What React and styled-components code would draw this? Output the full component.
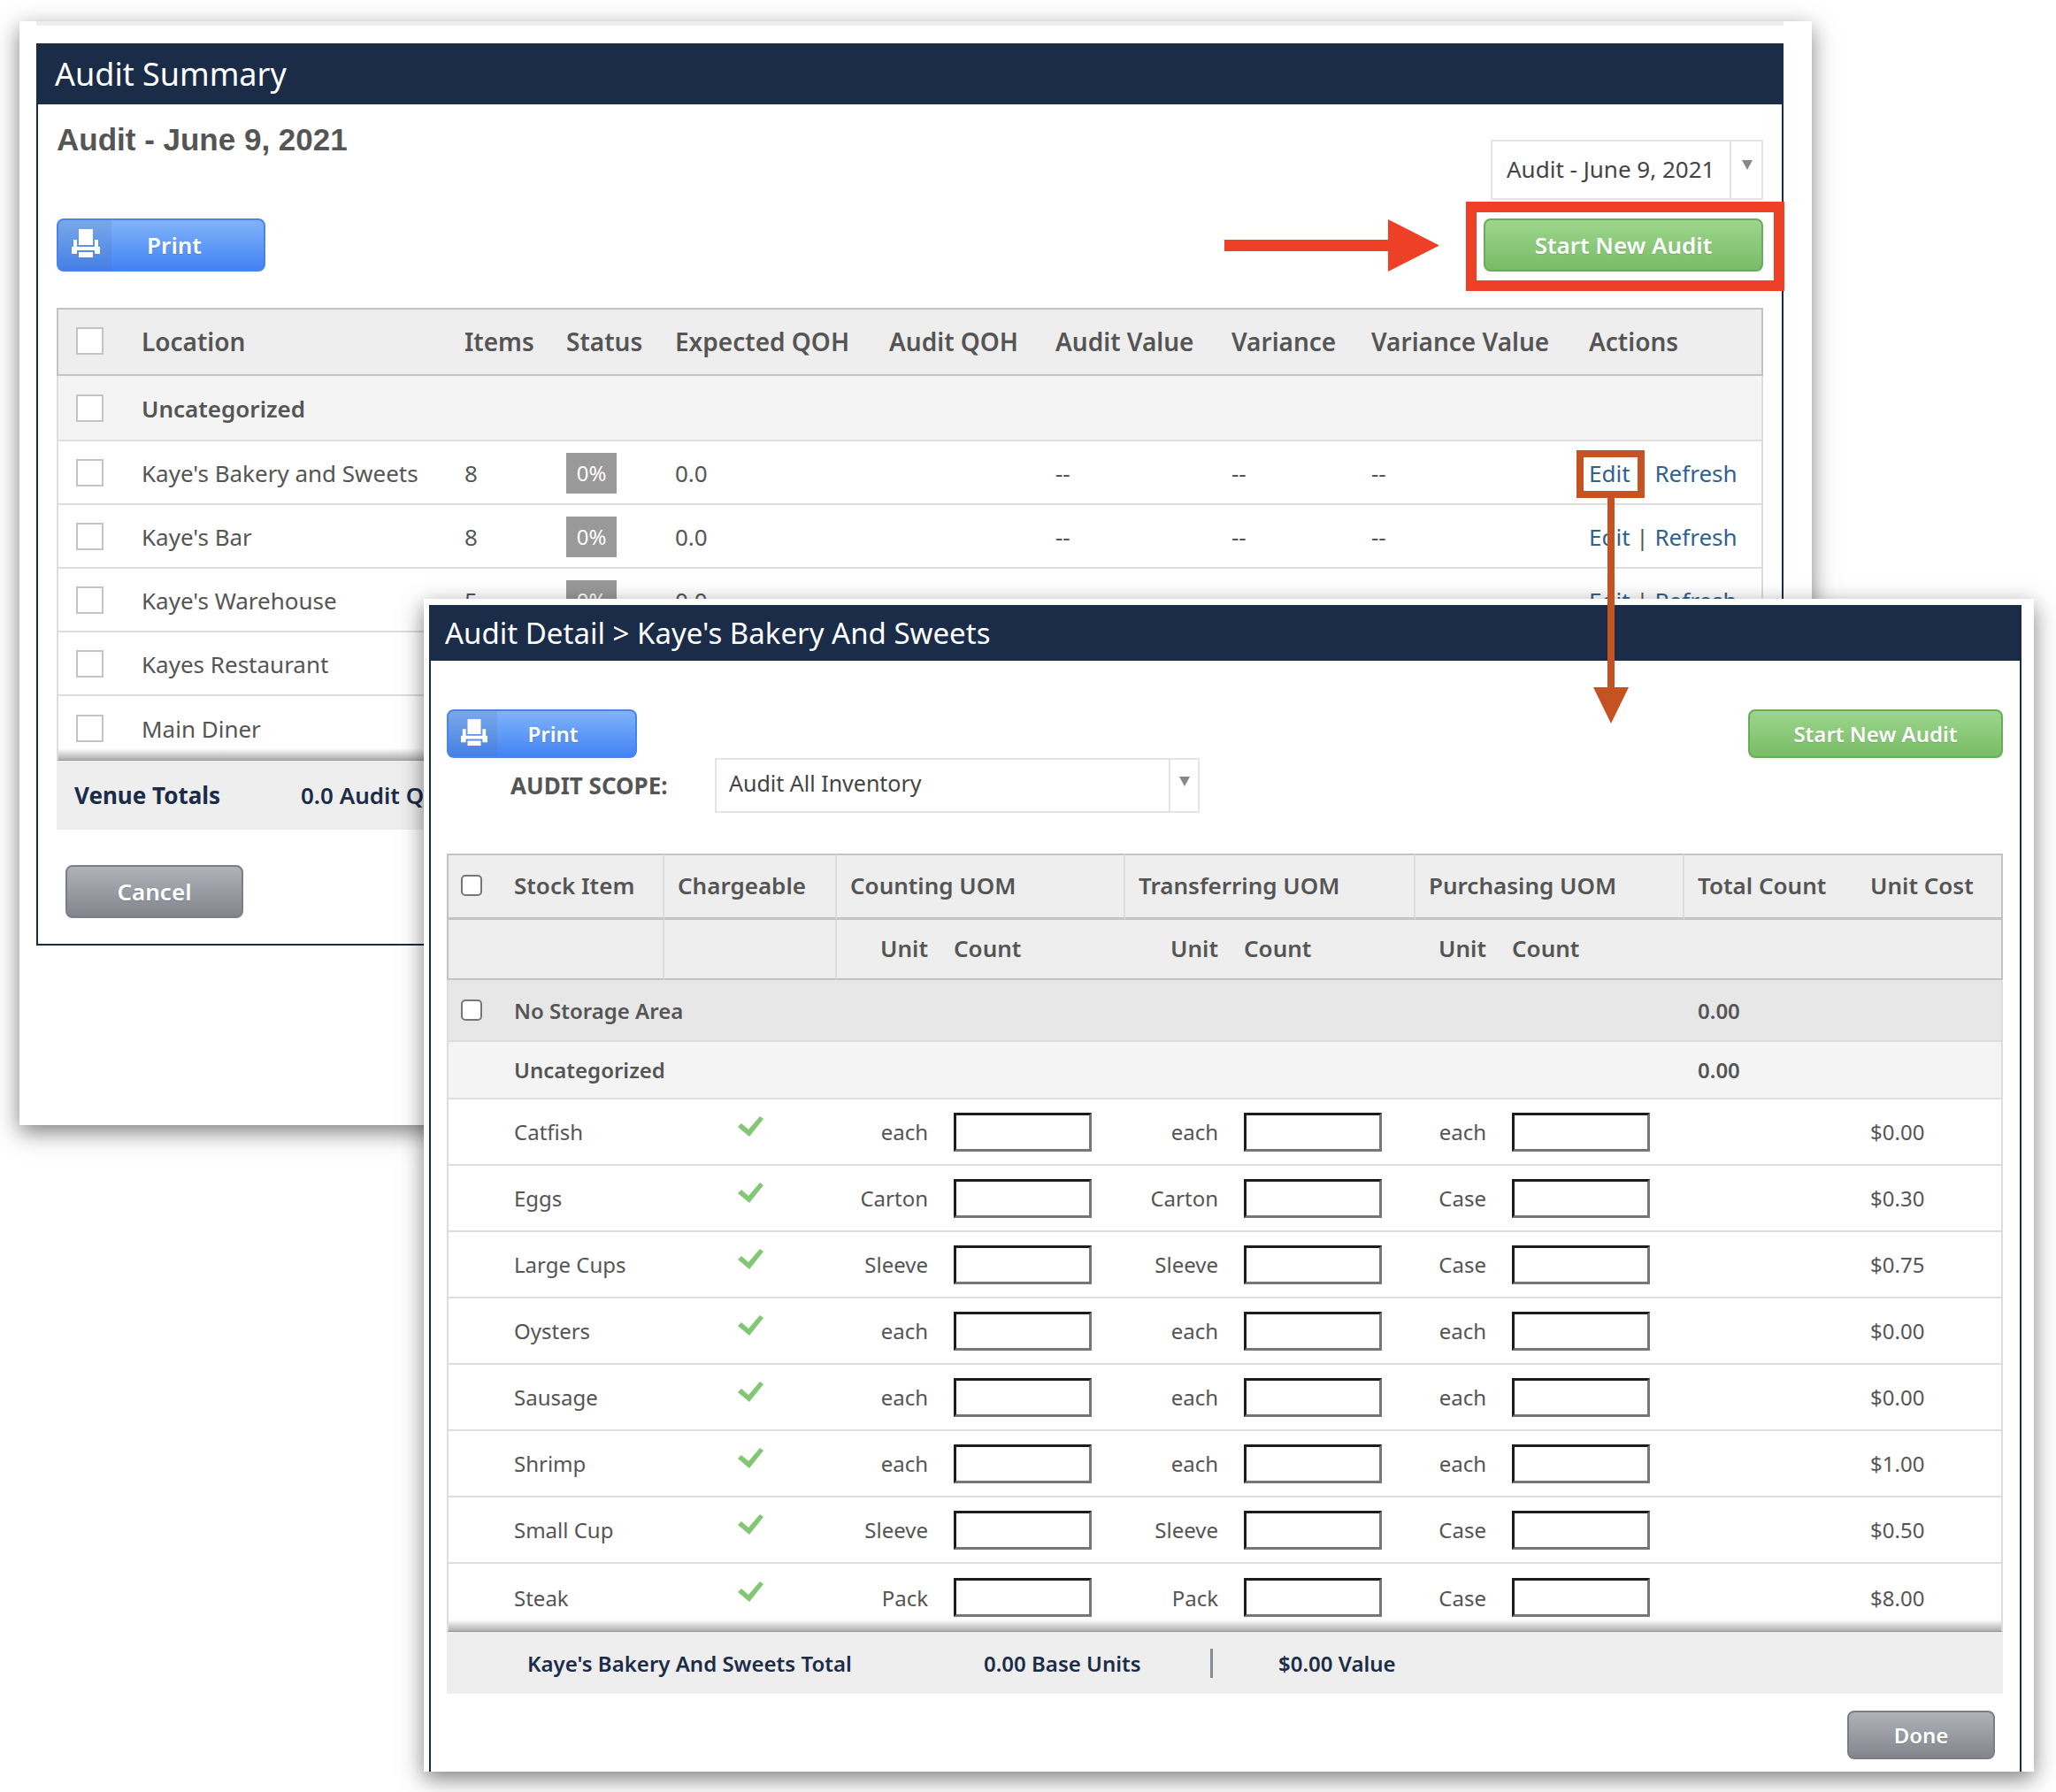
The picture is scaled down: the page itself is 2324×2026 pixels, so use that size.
import React from "react";
import styled, { createGlobalStyle, css } from "styled-components";

const navy = "#1b2c49";
const ink = "#555555";
const sans = '"Noto Sans", "Open Sans", sans-serif';

const GlobalStyle = createGlobalStyle`
  *, *::before, *::after { box-sizing: border-box; }
  body { margin: 0; background: #fff; color: ${ink}; font-family: ${sans}; }
  button, input, select { font-family: inherit; margin: 0; }
`;

const Canvas = styled.div`
  position: relative;
  min-height: 100vh;
  padding: 677px 25px 23px 479px;
  overflow: hidden;
`;

const windowSurface = css`
  background: #fff;
  box-shadow: 0 8px 24px rgba(0, 0, 0, 0.5);
`;

const SummaryWindow = styled.section`
  ${windowSurface}
  position: absolute;
  top: 24px;
  left: 22px;
  right: 276px;
  padding: 0 32px 203px 19px;
`;

const DetailWindow = styled.section`
  ${windowSurface}
  position: relative;
  z-index: 1;
  padding: 7px 14px 0 6px;
`;

const TopStrip = styled.div`
  height: 5px;
  margin-bottom: 20px;
  background: #eee;
`;

const Panel = styled.div`
  border: 2px solid ${navy};
  border-top: 0;
  border-bottom-width: ${(p) => (p.$open ? 0 : 2)}px;
`;

const TitleBar = styled.h1`
  margin: 0 -2px;
  padding: 0 ${(p) => (p.$compact ? 18 : 21)}px;
  background: ${navy};
  color: #fff;
  font-weight: 400;
  font-size: ${(p) => (p.$compact ? 33 : 36)}px;
  line-height: ${(p) => (p.$compact ? 63 : 69)}px;
`;

const SummaryBody = styled.div`
  padding: 16px 21px 29px;
`;

const DetailBody = styled.div`
  padding: 55px 19px 14px 18px;
`;

const AuditHeading = styled.h2`
  margin: 0;
  color: ${ink};
  font: 700 35px/48px "Liberation Sans", Arial, sans-serif;
`;

const Split = styled.div`
  display: flex;
  justify-content: space-between;
  align-items: flex-start;
`;

const HeadRow = styled(Split)`
  height: 113px;
`;

const PickerSlot = styled.div`
  padding-top: 24px;
`;

const SelectBox = styled.div`
  position: relative;
  width: ${(p) => p.$width}px;
  height: ${(p) => (p.$compact ? 62 : 68)}px;
  border: 2px solid #e4e4e4;

  &::before {
    content: "";
    position: absolute;
    top: 0;
    bottom: 0;
    right: ${(p) => (p.$compact ? 31 : 34)}px;
    width: 2px;
    background: #e4e4e4;
    pointer-events: none;
  }

  &::after {
    content: "";
    position: absolute;
    top: ${(p) => (p.$compact ? 19 : 21)}px;
    right: ${(p) => (p.$compact ? 9 : 10)}px;
    border: 6px solid transparent;
    border-top: 11px solid #888;
    border-bottom: 0;
    pointer-events: none;
  }

  select {
    appearance: none;
    width: 100%;
    height: 100%;
    padding: ${(p) => (p.$compact ? "0 40px 6px 14px" : "0 40px 2px 16px")};
    border: 0;
    border-radius: 0;
    background: transparent;
    color: #444;
    font-size: ${(p) => (p.$compact ? 25 : 26)}px;
  }
`;

const palettes = {
  blue: ["#83b5fa", "#4081f4", "#4a84ea"],
  green: ["#9fd78e", "#76bb65", "#69ad5b"],
  gray: ["#b1b4b9", "#80838b", "#7b7e86"],
};

const Button = styled.button`
  position: relative;
  display: flex;
  align-items: center;
  justify-content: center;
  width: ${(p) => p.$width}px;
  height: ${(p) => (p.$compact ? 55 : 60)}px;
  padding: 0;
  border: 2px solid ${(p) => palettes[p.$tone][2]};
  border-radius: 8px;
  background: linear-gradient(${(p) => palettes[p.$tone][0]}, ${(p) => palettes[p.$tone][1]});
  background-origin: border-box;
  color: #fff;
  font-weight: 600;
  font-size: ${(p) => (p.$compact ? 24 : 26)}px;
  text-shadow: 0 1px 1px rgba(0, 0, 0, 0.15);
  overflow: ${(p) => (p.$clip ? "hidden" : "visible")};
`;

const PrintIconCell = styled.span`
  display: flex;
  flex: none;
  align-items: center;
  justify-content: center;
  width: ${(p) => (p.$compact ? 55 : 60)}px;
  height: 100%;
  background: rgba(90, 110, 150, 0.16);

  svg {
    width: ${(p) => (p.$compact ? 30 : 32)}px;
    height: ${(p) => (p.$compact ? 30 : 32)}px;
    margin: 0 0 4px 2px;
  }
`;

const PrintLabel = styled.span`
  flex: 1;
  padding-right: 30px;
  text-align: center;
`;

const Highlight = styled.div`
  position: relative;

  &::after {
    content: "";
    position: absolute;
    inset: -19px -24px -22px -20px;
    border: 12px solid #ee4026;
    pointer-events: none;
  }
`;

const RedArrow = styled.svg`
  position: absolute;
  top: 1px;
  right: 366px;
  width: 243px;
  height: 59px;
`;

const EditMark = styled.span`
  position: relative;

  &::after {
    content: "";
    position: absolute;
    z-index: 2;
    top: -8px;
    left: -14px;
    width: 77px;
    height: 54px;
    border: 8px solid #c55322;
    pointer-events: none;
  }
`;

const BrownArrow = styled.svg`
  position: absolute;
  z-index: 2;
  top: 46px;
  left: 5px;
  width: 40px;
  height: 255px;
  pointer-events: none;
`;

const Table = styled.table`
  width: 100%;
  table-layout: fixed;
  border-collapse: separate;
  border-spacing: 0;
  font-size: ${(p) => (p.$compact ? 24 : 26)}px;

  th, td {
    padding: 0;
    text-align: left;
    white-space: nowrap;
    font-weight: 400;
  }

  tbody td { border-bottom: 2px solid #ddd; }
  tbody tr > :first-child { border-left: 2px solid #ddd; }
  tbody tr > :last-child { border-right: 2px solid #ddd; }

  thead th {
    padding-bottom: 2px;
    background: #eee;
    font-weight: 600;
    font-size: ${(p) => (p.$compact ? 26 : 28)}px;
    border-bottom: 2px solid #c3c3c3;
  }
  thead tr:first-child th { border-top: 2px solid #c3c3c3; }
  thead tr > :first-child { border-left: 2px solid #c3c3c3; }
  thead tr > :last-child { border-right: 2px solid #c3c3c3; }

  tbody tr:last-child { background: linear-gradient(to top, #a8a8a8, #fff 14px); }
  tbody tr:last-child > td { border-bottom: 1px solid #999; }
`;

const SummaryTable = styled(Table)`
  margin-top: 41px;

  thead th { height: 77px; }
  tbody td { height: 72px; }
  tbody td + td { padding-top: 2px; }
  tbody tr:last-child td { height: 73px; }
`;

const DetailTable = styled(Table)`
  margin-top: 46px;

  tbody td { height: 75px; }
  tbody td:nth-child(n + 3) { padding-left: 15px; }
  tbody tr:last-child td { height: 77px; }
`;

const HeadTop = styled.tr`
  && th {
    height: 75px;
    padding-left: 15px;
    border-bottom: 3px solid #c3c3c3;
  }
  && th:nth-child(1) { padding-left: 14px; }
  && th:nth-child(2) { padding-left: 0; }
  && th:nth-child(n + 2):nth-child(-n + 6) { border-right: 2px solid #ddd; }
`;

const HeadSub = styled.tr`
  && th { height: 68px; }
  && th:nth-child(2), && th:nth-child(3) { border-right: 2px solid #ddd; }
`;

const GroupRow = styled.tr`
  && td {
    height: ${(p) => p.$height}px;
    background: ${(p) => p.$shade};
    font-weight: 600;
  }
`;

const CheckCell = styled.td`
  && { padding-left: ${(p) => (p.$compact ? 14 : 20)}px; }
`;

const CheckHead = styled.th`
  && { padding-left: 20px; }
`;

const SquareCheck = styled.input`
  appearance: none;
  display: block;
  width: 31px;
  height: 31px;
  border: 2px solid #c4c4c4;
  background: #fff;
`;

const RoundCheck = styled.input`
  appearance: none;
  display: block;
  width: 24px;
  height: 24px;
  border: 2px solid #767676;
  border-radius: 5px;
  background: #fff;
`;

const Badge = styled.span`
  display: block;
  width: 57px;
  background: #999;
  color: #fff;
  font-size: 24px;
  line-height: 46px;
  text-align: center;
`;

const Link = styled.a`
  color: #2f628f;
  text-decoration: none;
`;

const UnitCell = styled.td`
  && { padding-right: 14px; text-align: right; }
`;

const UnitHead = styled.th`
  && { padding-right: 14px; text-align: right; }
`;

const CountHead = styled.th`
  && { padding-left: 15px; }
`;

const CountInput = styled.input`
  display: block;
  width: 156px;
  height: 44px;
  padding: 0 8px;
  border: 3px solid;
  border-color: #1c1c1c #767676 #767676 #1c1c1c;
  border-radius: 0;
  background: #fff;
  color: ${ink};
  font-size: 24px;
`;

const CheckMark = styled.svg`
  display: block;
  width: 29px;
  height: 24px;
  margin: 0 0 12px 68px;
`;

const TotalsBar = styled.div`
  display: flex;
  align-items: center;
  height: ${(p) => (p.$compact ? 70 : 78)}px;
  padding-left: ${(p) => (p.$compact ? 91 : 20)}px;
  background: #eee;
  color: ${navy};
  font-weight: 600;
  font-size: ${(p) => (p.$compact ? 24 : 26)}px;
  white-space: nowrap;
`;

const TotalName = styled.strong`
  width: ${(p) => p.$width}px;
  font-weight: ${(p) => p.$weight};
`;

const TotalUnits = styled.span`
  width: 256px;
`;

const Divider = styled.i`
  width: 3px;
  height: 33px;
  margin-right: 74px;
  background: #868b94;
`;

const Footer = styled.div`
  display: flex;
  padding: ${(p) => (p.$end ? "19px 9px 0" : "40px 10px 0")};
  justify-content: ${(p) => (p.$end ? "flex-end" : "flex-start")};
`;

const ScopeRow = styled.div`
  display: flex;
  align-items: center;
  padding-left: 72px;
`;

const ScopeLabel = styled.label`
  width: 231px;
  color: ${ink};
  font-weight: 700;
  font-size: 26px;
`;

const PrintIcon = () => (
  <svg viewBox="0 0 32 32" fill="#fff" aria-hidden="true">
    <path d="M8 0h16v18H8z" />
    <path d="M2 12h4v8h20v-8h4v8h2v8h-6v-4H6v4H0v-8h2z" />
    <path d="M8 26h16v6H8z" />
  </svg>
);

const PrintButton = ({ compact, width }) => (
  <Button type="button" $tone="blue" $width={width} $compact={compact} $clip>
    <PrintIconCell $compact={compact}><PrintIcon /></PrintIconCell>
    <PrintLabel>Print</PrintLabel>
  </Button>
);

const Tick = () => (
  <CheckMark viewBox="0 0 29 24" role="img" aria-label="Chargeable">
    <path d="M0 12l4-4 8 7L25 0l4 3-16 20z" fill="#82c774" />
  </CheckMark>
);

const locations = [
  { name: "Kaye's Bakery and Sweets", items: 8, marked: true },
  { name: "Kaye's Bar", items: 8 },
  { name: "Kaye's Warehouse", items: 5 },
  { name: "Kayes Restaurant", items: 8 },
  { name: "Main Diner", items: 8 },
];

const stock = [
  ["Catfish", "each", "each", "each", "$0.00"],
  ["Eggs", "Carton", "Carton", "Case", "$0.30"],
  ["Large Cups", "Sleeve", "Sleeve", "Case", "$0.75"],
  ["Oysters", "each", "each", "each", "$0.00"],
  ["Sausage", "each", "each", "each", "$0.00"],
  ["Shrimp", "each", "each", "each", "$1.00"],
  ["Small Cup", "Sleeve", "Sleeve", "Case", "$0.50"],
  ["Steak", "Pack", "Pack", "Case", "$8.00"],
];

const summaryColumns = [96, 365, 115, 123, 242, 188, 199, 158, 246];
const detailColumns = [76, 170, 195, 117, 209, 119, 209, 94, 210, 195];

const Columns = ({ widths }) => (
  <colgroup>
    {widths.map((w, i) => <col key={i} width={w} />)}
    <col />
  </colgroup>
);

function AuditSummary() {
  return (
    <SummaryWindow>
      <TopStrip />
      <Panel>
        <TitleBar>Audit Summary</TitleBar>
        <SummaryBody>
          <HeadRow>
            <AuditHeading>Audit - June 9, 2021</AuditHeading>
            <PickerSlot>
              <SelectBox $width={308}>
                <select aria-label="Audit">
                  <option>Audit - June 9, 2021</option>
                </select>
              </SelectBox>
            </PickerSlot>
          </HeadRow>
          <Split>
            <PrintButton width={236} />
            <Highlight>
              <RedArrow viewBox="0 0 243 59" fill="#ee4026" aria-hidden="true">
                <path d="M0 23h185V0l58 29.500-58 29.500V36H0z" />
              </RedArrow>
              <Button type="button" $tone="green" $width={316}>Start New Audit</Button>
            </Highlight>
          </Split>
          <SummaryTable>
            <Columns widths={summaryColumns} />
            <thead>
              <tr>
                <CheckHead><SquareCheck type="checkbox" aria-label="Select all locations" /></CheckHead>
                <th>Location</th>
                <th>Items</th>
                <th>Status</th>
                <th>Expected QOH</th>
                <th>Audit QOH</th>
                <th>Audit Value</th>
                <th>Variance</th>
                <th>Variance Value</th>
                <th>Actions</th>
              </tr>
            </thead>
            <tbody>
              <GroupRow $height={74} $shade="#f4f4f4">
                <CheckCell><SquareCheck type="checkbox" aria-label="Select Uncategorized" /></CheckCell>
                <td colSpan={9}>Uncategorized</td>
              </GroupRow>
              {locations.map((l) => (
                <tr key={l.name}>
                  <CheckCell><SquareCheck type="checkbox" aria-label={`Select ${l.name}`} /></CheckCell>
                  <td>{l.name}</td>
                  <td>{l.items}</td>
                  <td><Badge>0%</Badge></td>
                  <td>0.0</td>
                  <td />
                  <td>--</td>
                  <td>--</td>
                  <td>--</td>
                  <td>
                    {l.marked ? (
                      <EditMark>
                        <Link href="#edit">Edit</Link>
                        <BrownArrow viewBox="0 0 40 255" fill="#c55322" aria-hidden="true">
                          <path d="M16 0h8v214h16L20 255 0 214h16z" />
                        </BrownArrow>
                      </EditMark>
                    ) : (
                      <Link href="#edit">Edit</Link>
                    )}
                    {" | "}
                    <Link href="#refresh">Refresh</Link>
                  </td>
                </tr>
              ))}
            </tbody>
          </SummaryTable>
          <TotalsBar>
            <TotalName $width={256} $weight={700}>Venue Totals</TotalName>
            <span>0.0 Audit QOH</span>
          </TotalsBar>
          <Footer>
            <Button type="button" $tone="gray" $width={201}>Cancel</Button>
          </Footer>
        </SummaryBody>
      </Panel>
    </SummaryWindow>
  );
}

function AuditDetail() {
  return (
    <DetailWindow>
      <Panel $open>
        <TitleBar $compact>Audit Detail &gt; Kaye's Bakery And Sweets</TitleBar>
        <DetailBody>
          <Split>
            <PrintButton compact width={215} />
            <Button type="button" $tone="green" $width={288} $compact>Start New Audit</Button>
          </Split>
          <ScopeRow>
            <ScopeLabel htmlFor="scope">AUDIT SCOPE:</ScopeLabel>
            <SelectBox $width={548} $compact>
              <select id="scope">
                <option>Audit All Inventory</option>
              </select>
            </SelectBox>
          </ScopeRow>
          <DetailTable $compact>
            <Columns widths={detailColumns} />
            <thead>
              <HeadTop>
                <th><RoundCheck type="checkbox" aria-label="Select all stock items" /></th>
                <th>Stock Item</th>
                <th>Chargeable</th>
                <th colSpan={2}>Counting UOM</th>
                <th colSpan={2}>Transferring UOM</th>
                <th colSpan={2}>Purchasing UOM</th>
                <th>Total Count</th>
                <th>Unit Cost</th>
              </HeadTop>
              <HeadSub>
                <th />
                <th />
                <th />
                <UnitHead>Unit</UnitHead>
                <CountHead>Count</CountHead>
                <UnitHead>Unit</UnitHead>
                <CountHead>Count</CountHead>
                <UnitHead>Unit</UnitHead>
                <CountHead>Count</CountHead>
                <th />
                <th />
              </HeadSub>
            </thead>
            <tbody>
              <GroupRow $height={70} $shade="#e7e7e7">
                <CheckCell $compact><RoundCheck type="checkbox" aria-label="Select No Storage Area" /></CheckCell>
                <td colSpan={8}>No Storage Area</td>
                <td>0.00</td>
                <td />
              </GroupRow>
              <GroupRow $height={65} $shade="#f4f4f4">
                <td />
                <td colSpan={8}>Uncategorized</td>
                <td>0.00</td>
                <td />
              </GroupRow>
              {stock.map(([name, counting, transferring, purchasing, cost]) => (
                <tr key={name}>
                  <td />
                  <td>{name}</td>
                  <td><Tick /></td>
                  <UnitCell>{counting}</UnitCell>
                  <td><CountInput type="text" aria-label={`${name} counting count`} /></td>
                  <UnitCell>{transferring}</UnitCell>
                  <td><CountInput type="text" aria-label={`${name} transferring count`} /></td>
                  <UnitCell>{purchasing}</UnitCell>
                  <td><CountInput type="text" aria-label={`${name} purchasing count`} /></td>
                  <td />
                  <td>{cost}</td>
                </tr>
              ))}
            </tbody>
          </DetailTable>
          <TotalsBar $compact>
            <TotalName $width={516} $weight={600}>Kaye's Bakery And Sweets Total</TotalName>
            <TotalUnits>0.00 Base Units</TotalUnits>
            <Divider />
            <span>$0.00 Value</span>
          </TotalsBar>
          <Footer $end>
            <Button type="button" $tone="gray" $width={167} $compact>Done</Button>
          </Footer>
        </DetailBody>
      </Panel>
    </DetailWindow>
  );
}

export default function App() {
  return (
    <>
      <GlobalStyle />
      <Canvas>
        <AuditSummary />
        <AuditDetail />
      </Canvas>
    </>
  );
}
